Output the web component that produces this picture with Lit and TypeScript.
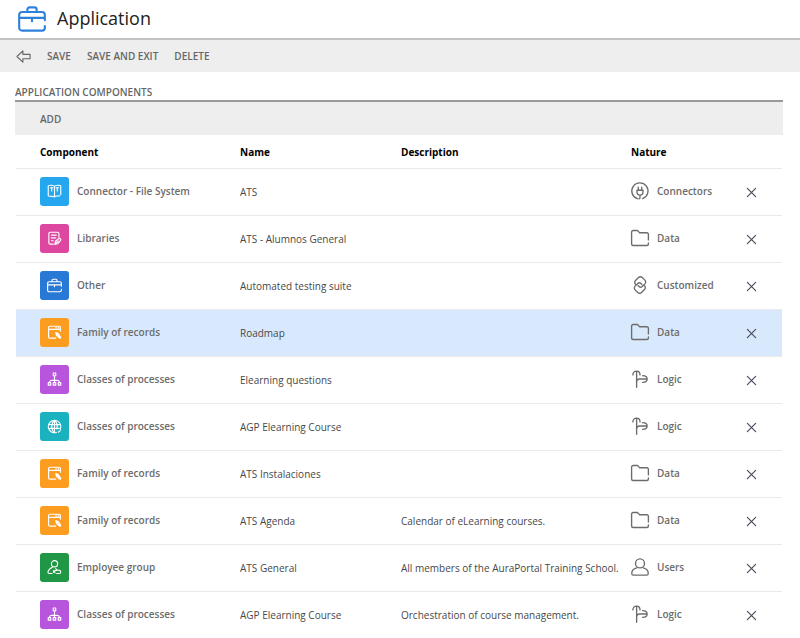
import { LitElement, html, css, svg } from "lit";
import { customElement, property } from "lit/decorators.js";
import { classMap } from "lit/directives/class-map.js";

const glyphs = {
  briefcase: svg`<path d="M23 9.500V8.500a2.500 2.500 0 0 0-2.500-2.500h-17A2.500 2.500 0 0 0 1 8.500v11A2.500 2.500 0 0 0 3.500 22h17a2.500 2.500 0 0 0 2.500-2.500V18M23 8.500v4.500M8 6V4a2 2 0 0 1 2-2h4a2 2 0 0 1 2 2v2M1 11h22M12 11v3"/>`,
  shelf: svg`<path d="M12 4v16M12 4C10.500 1.500 4 1.500 2 3v16c2.500 1.500 8.500 0 10 1.500 1.500-1.500 5-1 8-1.500M12 4c1.500-2.500 8-2.500 10-1v14M5.500 6h4M7.500 6v5M14.500 6h4M16.500 6v5"/>`,
  library: svg`<path d="M19 10V4a2 2 0 0 0-2-2H5a2 2 0 0 0-2 2v15a2 2 0 0 0 2 2h5M7 6.500h8M7 11h7M7 15.500h3M12.500 21.500l1-5 5-4a2 2 0 0 1 3 3l-4.500 5zM14 20l4-4"/>`,
  record: svg`<path d="M21.500 10V4a2 2 0 0 0-2-2h-15a2 2 0 0 0-2 2v15a2 2 0 0 0 2 2H14M2.500 7h19M14 4.500h1M18 4.500h1M14 12l7.500 9M14 12l1 4.500 5 4.500 2-1.500-4-6z"/>`,
  tree: svg`<path d="M10 1.500h4v4.500h-4zM2 17h4v4H2zM10 17h4v4h-4zM18 17h4v4h-4zM12 6v11M4 17c0-4 3-4 8-4s8 0 8 4"/>`,
  globe: svg`<path d="M15 21.500A10 10 0 1 1 21.500 15M2.500 9h19M2.500 15h17M12 2v20M12 2c-6 5-6 15 0 20M12 2c4 3.500 5 9 4 14M18 21c2-.5 3-2 3.500-4"/>`,
  employee: svg`<circle cx="12" cy="6" r="5"/><path d="M8.500 11.500C5 13.500 1.500 16 1.500 19.500c0 1.500 1 2 2 2h4.500M14 13.500l2 3M11 16.500l-1 3 3 1M10.500 19c3-3.500 7-3 9-2.500a2.500 2.500 0 0 1 0 5h-4"/>`,
  plug: svg`<path d="M12 17.500c-3 0-4-2-4-4.500v-2h8v2c0 2.500-1 4.500-4 4.500M9.700 11V7M14.300 11V7M8.500 22.300A10.800 10.800 0 1 1 15.500 22.200M12 17.500v3.500q0 1.500-1.500 1.500"/>`,
  folder: svg`<path d="M23.200 14.500V7a2 2 0 0 0-2-2H11.500L9.500 2.800A1.500 1.500 0 0 0 8.300 2H2.800a2 2 0 0 0-2 2v16a2 2 0 0 0 2 2h18.400a2 2 0 0 0 2-2v-1.500"/>`,
  link: svg`<path d="M6.500 11.500 6 11a3.500 3.500 0 0 1 0-5l4-4a3.500 3.500 0 0 1 5 0l3.500 3.500a3.500 3.500 0 0 1 0 5L15 14a3 3 0 0 1-4.200 0L9.500 12.700M17.500 12.500 18 13a3.500 3.500 0 0 1 0 5l-4 4a3.500 3.500 0 0 1-5 0l-3.500-3.500a3.500 3.500 0 0 1 0-5L9 10a3 3 0 0 1 4.200 0L14.500 11.300"/>`,
  branch: svg`<path d="M7.500 23V2M2.500 6.500C2.500 3.500 4.500 1.500 7.500 1.500S12 3.500 12 6.500M7.500 16.500c0-3.500 1.500-4.500 4-4.500h9M15.500 7.500c4 0 6 2 6 4.500s-2 4.500-6 4.500"/>`,
  user: svg`<circle cx="12" cy="7.200" r="6"/><path d="M7.500 13.300C3.500 14.500 1 17 1 20.500 1 22 1.800 22.800 3 22.800h18c1.200 0 2-.8 2-2.300 0-3.500-2.500-6-6.500-7.200"/>`,
  close: svg`<path d="M3 3l18 18M21 3 3 21"/>`,
  back: svg`<path d="M1.500 12 11 3v5.500h11.500v7H11V21z"/>`,
};

type Glyph = keyof typeof glyphs;

@customElement("line-icon")
class LineIcon extends LitElement {
  @property() name: Glyph = "folder";

  static styles = css`
    :host {
      display: block;
      flex: none;
      width: 18px;
      height: 18px;
    }
    .glyph {
      display: block;
      overflow: visible;
      width: 100%;
      height: 100%;
      fill: none;
      stroke: currentColor;
      stroke-width: var(--icon-stroke, 1.8);
      stroke-linecap: round;
      stroke-linejoin: round;
    }
  `;

  render() {
    return html`<svg class="glyph" viewBox="0 0 24 24" aria-hidden="true">${glyphs[this.name]}</svg>`;
  }
}

interface Row {
  kind: string;
  icon: Glyph;
  tone: string;
  name: string;
  description?: string;
  nature: string;
  selected?: boolean;
}

const natureIcons: Record<string, Glyph> = {
  Connectors: "plug",
  Data: "folder",
  Customized: "link",
  Logic: "branch",
  Users: "user",
};

const rows: Row[] = [
  { kind: "Connector - File System", icon: "shelf", tone: "sky", name: "ATS", nature: "Connectors" },
  { kind: "Libraries", icon: "library", tone: "pink", name: "ATS - Alumnos General", nature: "Data" },
  { kind: "Other", icon: "briefcase", tone: "blue", name: "Automated testing suite", nature: "Customized" },
  { kind: "Family of records", icon: "record", tone: "orange", name: "Roadmap", nature: "Data", selected: true },
  { kind: "Classes of processes", icon: "tree", tone: "purple", name: "Elearning questions", nature: "Logic" },
  { kind: "Classes of processes", icon: "globe", tone: "teal", name: "AGP Elearning Course", nature: "Logic" },
  { kind: "Family of records", icon: "record", tone: "orange", name: "ATS Instalaciones", nature: "Data" },
  { kind: "Family of records", icon: "record", tone: "orange", name: "ATS Agenda", description: "Calendar of eLearning courses.", nature: "Data" },
  { kind: "Employee group", icon: "employee", tone: "green", name: "ATS General", description: "All members of the AuraPortal Training School.", nature: "Users" },
  { kind: "Classes of processes", icon: "tree", tone: "purple", name: "AGP Elearning Course", description: "Orchestration of course management.", nature: "Logic" },
];

@customElement("app-root")
class AppRoot extends LitElement {
  static styles = css`
    :host {
      display: block;
      background: #fff;
      color: #666;
      font: 600 10px/16px "Open Sans", "Noto Sans", sans-serif;
    }
    button {
      margin: 0;
      padding: 0;
      border: 0;
      background: none;
      color: inherit;
      font: inherit;
      cursor: pointer;
    }
    .title-bar {
      display: flex;
      align-items: center;
      gap: 11px;
      height: 38px;
      padding: 0 18px;
      border-bottom: 2px solid #c3c3c3;
    }
    .app-icon {
      width: 28px;
      height: 28px;
      color: #2f80dc;
    }
    .title {
      margin: 0;
      padding-bottom: 2px;
      color: #222;
      font-size: 18px;
      font-weight: 400;
      line-height: 24px;
    }
    .toolbar {
      display: flex;
      align-items: center;
      gap: 16px;
      height: 32px;
      padding: 0 16px;
      background: #eee;
    }
    .back-icon {
      width: 15px;
      height: 15px;
    }
    .content {
      padding: 12px 17px 0 15px;
    }
    .section-title {
      margin: 0;
      font-size: 10px;
      font-weight: 600;
      line-height: 16px;
    }
    .list-bar {
      display: flex;
      align-items: center;
      height: 33px;
      padding-left: 25px;
      border-top: 2px solid #999;
      background: #eee;
    }
    .list {
      padding: 0 1px;
    }
    .components {
      width: 100%;
      border-collapse: separate;
      border-spacing: 0;
      table-layout: fixed;
    }
    .component-col {
      width: 224px;
    }
    .name-col {
      width: 161px;
    }
    .nature-col {
      width: 115px;
    }
    .remove-col {
      width: 36px;
    }
    th,
    td {
      box-sizing: border-box;
      padding: 0;
      border-bottom: 1px solid #eaeaea;
      text-align: left;
    }
    th {
      height: 34px;
      color: #000;
      font-weight: 700;
    }
    td {
      height: 47px;
      padding-bottom: 2px;
    }
    th:first-child,
    td:first-child {
      padding-left: 24px;
    }
    .plain {
      padding-bottom: 0;
      color: #484848;
      font-weight: 400;
    }
    .selected td {
      background: #d8e9fe;
    }
    .labelled {
      display: flex;
      align-items: center;
      gap: 8px;
      color: #6c6c6c;
    }
    .tile {
      display: flex;
      flex: none;
      align-items: center;
      justify-content: center;
      width: 29px;
      height: 29px;
      border-radius: 3px;
      color: #fff;
    }
    .tile-icon {
      width: 15px;
      height: 15px;
    }
    .sky { background: #25a7f0; }
    .pink { background: #de479f; }
    .blue { background: #2879d6; }
    .orange { background: #fd9d1f; }
    .purple { background: #b755dd; }
    .teal { background: #1bb2bf; }
    .green { background: #1f9745; }
    .remove {
      display: flex;
      padding-top: 2px;
      color: #4a4a5c;
    }
    .remove-icon {
      width: 11px;
      height: 11px;
      --icon-stroke: 2.6;
    }
  `;

  private row(r: Row) {
    return html`
      <tr class=${classMap({ selected: !!r.selected })}>
        <td>
          <div class="labelled">
            <span class="tile ${r.tone}"><line-icon class="tile-icon" name=${r.icon}></line-icon></span>
            <span>${r.kind}</span>
          </div>
        </td>
        <td class="plain">${r.name}</td>
        <td class="plain">${r.description}</td>
        <td>
          <div class="labelled">
            <line-icon name=${natureIcons[r.nature]}></line-icon>
            <span>${r.nature}</span>
          </div>
        </td>
        <td>
          <button class="remove" type="button" aria-label="Remove">
            <line-icon class="remove-icon" name="close"></line-icon>
          </button>
        </td>
      </tr>
    `;
  }

  render() {
    return html`
      <header class="title-bar">
        <line-icon class="app-icon" name="briefcase"></line-icon>
        <h1 class="title">Application</h1>
      </header>
      <nav class="toolbar">
        <button type="button" aria-label="Back">
          <line-icon class="back-icon" name="back"></line-icon>
        </button>
        <button type="button">SAVE</button>
        <button type="button">SAVE AND EXIT</button>
        <button type="button">DELETE</button>
      </nav>
      <main class="content">
        <h2 class="section-title">APPLICATION COMPONENTS</h2>
        <div class="list-bar"><button type="button">ADD</button></div>
        <div class="list">
          <table class="components">
            <colgroup>
              <col class="component-col" />
              <col class="name-col" />
              <col />
              <col class="nature-col" />
              <col class="remove-col" />
            </colgroup>
            <thead>
              <tr>
                <th scope="col">Component</th>
                <th scope="col">Name</th>
                <th scope="col">Description</th>
                <th scope="col">Nature</th>
                <th aria-label="Actions"></th>
              </tr>
            </thead>
            <tbody>
              ${rows.map((r) => this.row(r))}
            </tbody>
          </table>
        </div>
      </main>
    `;
  }
}
